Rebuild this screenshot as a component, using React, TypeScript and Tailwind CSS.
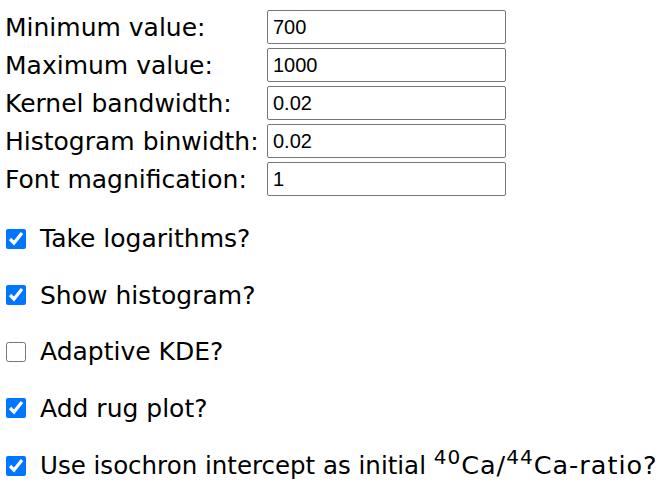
import React, { useState } from 'react';

type Campo = { rotulo: string; valor: string };

const campos: Campo[] = [
  { rotulo: 'Minimum value:', valor: '700' },
  { rotulo: 'Maximum value:', valor: '1000' },
  { rotulo: 'Kernel bandwidth:', valor: '0.02' },
  { rotulo: 'Histogram binwidth:', valor: '0.02' },
  { rotulo: 'Font magnification:', valor: '1' },
];

type Opcao = { id: string; rotulo: React.ReactNode; marcado: boolean };

const opcoesIniciais: Opcao[] = [
  { id: 'log', rotulo: 'Take logarithms?', marcado: true },
  { id: 'hist', rotulo: 'Show histogram?', marcado: true },
  { id: 'adaptive', rotulo: 'Adaptive KDE?', marcado: false },
  { id: 'rug', rotulo: 'Add rug plot?', marcado: true },
  {
    id: 'isochron',
    rotulo: (
      <span className="text-[24.5px]">
        Use isochron intercept as initial{' '}
        <span className="tracking-[1px]">
          <sup className="text-[20px]">40</sup>
          <span className="text-[25.5px]">Ca/</span>
          <sup className="text-[20px]">44</sup>
          <span className="text-[25.5px]">Ca-ratio?</span>
        </span>
      </span>
    ),
    marcado: true,
  },
];

const App: React.FC = () => {
  const [valores, setValores] = useState(campos.map((c) => c.valor));
  const [opcoes, setOpcoes] = useState(opcoesIniciais.map((o) => o.marcado));

  return (
    <div className="w-[663px] h-[493px] bg-white text-black font-['DejaVu_Sans',sans-serif] text-[25px] overflow-hidden">
      {/* Campos numéricos */}
      <div className="grid grid-cols-[267px_239px] gap-y-[4px] pt-[10px]">
        {campos.map((campo, i) => (
          <React.Fragment key={campo.rotulo}>
            <label className="pl-[5px] h-[34px] flex items-center leading-none whitespace-nowrap">
              {campo.rotulo}
            </label>
            <input
              type="text"
              value={valores[i]}
              onChange={(e) => setValores(valores.map((v, j) => (j === i ? e.target.value : v)))}
              className="h-[34px] w-[239px] border border-[#767676] rounded-[2px] px-[5px] font-['Liberation_Sans',Arial,sans-serif] text-[20px] text-black outline-none"
            />
          </React.Fragment>
        ))}
      </div>

      {/* Opções */}
      <div className="flex flex-col gap-[23.5px] mt-[26px]">
        {opcoesIniciais.map((opcao, i) => (
          <div key={opcao.id} className={`flex items-center h-[33px] ${i === 4 ? 'mt-[1px]' : ''}`}>
            <input
              type="checkbox"
              id={opcao.id}
              checked={opcoes[i]}
              onChange={() => setOpcoes(opcoes.map((o, j) => (j === i ? !o : o)))}
              className="w-[20px] h-[20px] ml-[6px] mr-[14px] accent-[#0075ff]"
            />
            <label htmlFor={opcao.id} className="leading-none whitespace-nowrap">
              {opcao.rotulo}
            </label>
          </div>
        ))}
      </div>
    </div>
  );
};

export default App;
